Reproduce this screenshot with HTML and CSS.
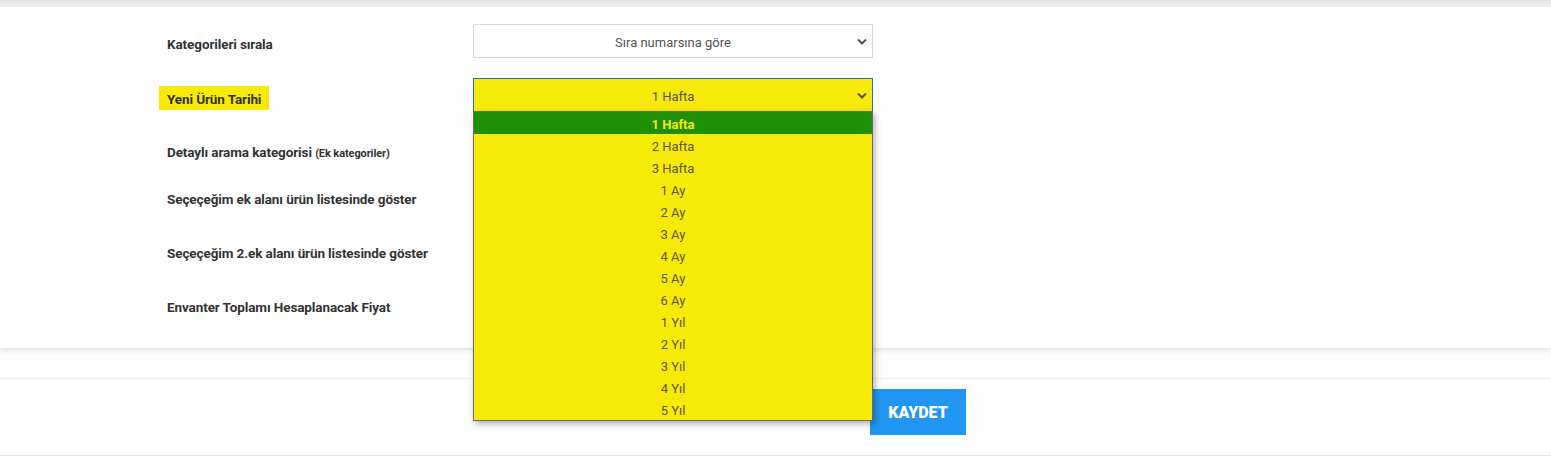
FILE: index.html
```html
<!DOCTYPE html>
<html lang="tr">
<head>
  <meta charset="UTF-8" />
  <title>Ayarlar</title>
  <link rel="stylesheet" href="styles.css">
</head>
<body>

  <div class="topbar"></div>

  <div class="card">
    <div class="row">
      <label class="label">Kategorileri sırala</label>
      <div class="select">
        <span>Sıra numarsına göre</span>
        <svg class="chev" width="10" height="7" viewBox="0 0 10 7"><polyline points="1,1.5 5,5.5 9,1.5" fill="none" stroke="#555" stroke-width="2"/></svg>
      </div>
    </div>

    <div class="row">
      <label class="label"><span class="mark">Yeni Ürün Tarihi</span></label>
      <div class="select-wrap">
        <div class="select yellow focused">
          <span>1 Hafta</span>
          <svg class="chev" width="10" height="7" viewBox="0 0 10 7"><polyline points="1,1.5 5,5.5 9,1.5" fill="none" stroke="#555" stroke-width="2"/></svg>
        </div>
        <ul class="options">
          <li class="selected">1 Hafta</li>
          <li>2 Hafta</li>
          <li>3 Hafta</li>
          <li>1 Ay</li>
          <li>2 Ay</li>
          <li>3 Ay</li>
          <li>4 Ay</li>
          <li>5 Ay</li>
          <li>6 Ay</li>
          <li>1 Yıl</li>
          <li>2 Yıl</li>
          <li>3 Yıl</li>
          <li>4 Yıl</li>
          <li>5 Yıl</li>
        </ul>
      </div>
    </div>

    <div class="row">
      <label class="label">Detaylı arama kategorisi <small>(Ek kategoriler)</small></label>
    </div>

    <div class="row short">
      <label class="label">Seçeçeğim ek alanı ürün listesinde göster</label>
    </div>

    <div class="row">
      <label class="label">Seçeçeğim 2.ek alanı ürün listesinde göster</label>
    </div>

    <div class="row">
      <label class="label">Envanter Toplamı Hesaplanacak Fiyat</label>
    </div>
  </div>

  <div class="spacer"></div>

  <div class="actions">
    <button class="btn-save">KAYDET</button>
  </div>

</body>
</html>
```

FILE: styles.css
```css
body {
  font-family: Roboto, "Noto Sans", sans-serif;
  background: #fdfdfd;
  margin: 0;
  padding: 0;
  color: #333;
}

.topbar {
  height: 7px;
  background: linear-gradient(#e2e2e2, #f3f3f3);
}

.card {
  background: white;
  box-shadow: 0 2px 5px rgba(0, 0, 0, 0.12);
  padding: 17px 0 27px 167px;
  position: relative;
}

.row {
  display: flex;
  align-items: flex-start;
  min-height: 34px;
  margin-bottom: 20px;
}

.row:last-child {
  margin-bottom: 0;
}

.row.short {
  min-height: 27px;
}

.label {
  width: 306px;
  margin-top: 8px;
  line-height: 25px;
  font-size: 13.5px;
  font-weight: bold;
  letter-spacing: -0.1px;
  color: #333;
}

.row.short .label {
  margin-top: 1px;
}

.label small {
  font-size: 11px;
}

.mark {
  background: #f7ea08;
  padding: 0 8px;
  margin-left: -8px;
  display: inline-block;
  line-height: 24px;
  padding-top: 1px;
  height: 23px;
}

.select-wrap {
  position: relative;
}

.select {
  width: 400px;
  height: 34px;
  box-sizing: border-box;
  padding-top: 2px;
  border: 1px solid #d6d6de;
  background: white;
  display: flex;
  align-items: center;
  justify-content: center;
  position: relative;
  font-size: 13px;
  color: #555;
}

.select .chev {
  position: absolute;
  right: 5px;
  top: 13px;
}

.select.yellow {
  background: #f7ea08;
}

.select.focused {
  border-color: #1a73d0;
}

.options {
  position: absolute;
  top: 33px;
  left: 0;
  width: 400px;
  box-sizing: border-box;
  margin: 0;
  padding: 0;
  list-style: none;
  background: #f7ea08;
  border: 1px solid #6b6b6b;
  box-shadow: 2px 3px 6px rgba(0, 0, 0, 0.3);
  z-index: 5;
}

.options li {
  height: 19px;
  line-height: 19px;
  padding-top: 3px;
  text-align: center;
  font-size: 13px;
  color: #5a571c;
}

.options li.selected {
  background: #1f8f08;
  color: #f7ea08;
  font-weight: bold;
}

.spacer {
  height: 30px;
  border-bottom: 1px solid #efefef;
}

.actions {
  padding: 10px 0 20px 870px;
  border-bottom: 1px solid #e4e4e4;
}

.btn-save {
  background: #2196f3;
  color: white;
  border: none;
  width: 96px;
  height: 46px;
  font-family: Roboto, sans-serif;
  font-weight: 900;
  font-size: 16px;
  cursor: pointer;
}
```
